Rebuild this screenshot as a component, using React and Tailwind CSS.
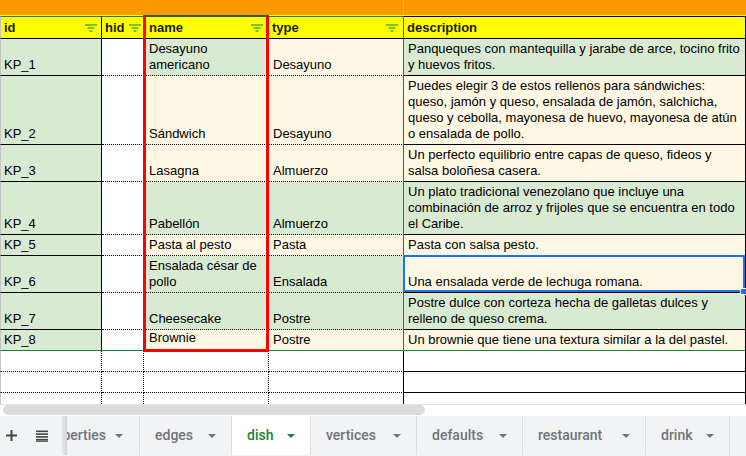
import React from 'react';

const G = 'bg-[#d9ead3]';
const C = 'bg-[#fdf7e3]';

const ROWS = [
  { id: 'KP_1', h: 'h-[37px]', name: ['Desayuno', 'americano'], nb: G, type: 'Desayuno', tb: C,
    desc: ['Panqueques con mantequilla y jarabe de arce, tocino frito', 'y huevos fritos.'], db: G },
  { id: 'KP_2', h: 'h-[69px]', name: ['Sándwich'], nb: C, type: 'Desayuno', tb: C,
    desc: ['Puedes elegir 3 de estos rellenos para sándwiches:', 'queso, jamón y queso, ensalada de jamón, salchicha,', 'queso y cebolla, mayonesa de huevo, mayonesa de atún', 'o ensalada de pollo.'], db: C },
  { id: 'KP_3', h: 'h-[37px]', name: ['Lasagna'], nb: C, type: 'Almuerzo', tb: C,
    desc: ['Un perfecto equilibrio entre capas de queso, fideos y', 'salsa boloñesa casera.'], db: C },
  { id: 'KP_4', h: 'h-[53px]', name: ['Pabellón'], nb: G, type: 'Almuerzo', tb: G,
    desc: ['Un plato tradicional venezolano que incluye una', 'combinación de arroz y frijoles que se encuentra en todo', 'el Caribe.'], db: G },
  { id: 'KP_5', h: 'h-[21px]', name: ['Pasta al pesto'], nb: C, type: 'Pasta', tb: C,
    desc: ['Pasta con salsa pesto.'], db: C },
  { id: 'KP_6', h: 'h-[37px]', name: ['Ensalada césar de', 'pollo'], nb: G, type: 'Ensalada', tb: G,
    desc: ['Una ensalada verde de lechuga romana.'], db: C },
  { id: 'KP_7', h: 'h-[37px]', name: ['Cheesecake'], nb: G, type: 'Postre', tb: G,
    desc: ['Postre dulce con corteza hecha de galletas dulces y', 'relleno de queso crema.'], db: G },
  { id: 'KP_8', h: 'h-[21px]', name: ['Brownie'], nb: C, type: 'Postre', tb: C,
    desc: ['Un brownie que tiene una textura similar a la del pastel.'], db: C, raise: true },
];

const TABS = [
  { label: 'edges', w: 'w-[92px]' },
  { label: 'dish', w: 'w-[79px]', active: true },
  { label: 'vertices', w: 'w-[106px]' },
  { label: 'defaults', w: 'w-[106px]' },
  { label: 'restaurant', w: 'w-[123px]' },
  { label: 'drink', w: 'w-[84px]' },
];

const cell = 'flex flex-col justify-end px-[3px] pb-[2px] leading-[16px] overflow-hidden whitespace-nowrap';
const dotB = 'border-b border-b-black [border-bottom-style:dotted]';

const Filter = () => (
  <svg width="12" height="8" viewBox="0 0 12 8" className="shrink-0">
    <g stroke="#1e9a46" strokeWidth="1.2">
      <line x1="0" y1="1" x2="12" y2="1" />
      <line x1="2.5" y1="4" x2="9.5" y2="4" />
      <line x1="4.5" y1="7" x2="7.5" y2="7" />
    </g>
  </svg>
);

const Caret = ({ color }) => (
  <svg width="8" height="4" viewBox="0 0 8 4" className="shrink-0">
    <polygon points="0,0 8,0 4,4" fill={color} />
  </svg>
);

const App = () => {
  return (
    <div className="relative w-[746px] h-[456px] overflow-hidden bg-white flex flex-col font-['Liberation_Sans',Arial,sans-serif] text-[13px] text-black">
      {/* orange frozen row */}
      <div className="h-[15px] shrink-0 flex bg-[#ff9900]">
        <div className="w-[403px] shrink-0" />
        <div className="w-px bg-[#f7ad45]" />
      </div>

      {/* header */}
      <div className="h-[24px] shrink-0 flex font-bold text-[#1c1c1c] bg-[#ffff00] pt-[1px]">
        <div className="w-[102px] shrink-0 flex items-center justify-between pl-[3px] pr-[4px] border-l border-l-[#c4c4c4] border-t border-t-[#188038] border-b border-b-black border-r border-r-black">
          <span>id</span><Filter />
        </div>
        <div className="w-[42px] shrink-0 flex items-center justify-between pl-[3px] pr-[3px] border-t border-t-[#188038] border-b border-b-black">
          <span>hid</span><Filter />
        </div>
        <div className="w-[125px] shrink-0 flex items-center justify-between pl-[5px] pr-[6px] border-t border-t-[#188038] border-b border-b-black">
          <span>name</span><Filter />
        </div>
        <div className="w-[135px] shrink-0 flex items-center justify-between pl-[3px] pr-[5px] border-t border-t-[#188038] border-b border-b-black border-r border-r-[#188038]">
          <span>type</span><Filter />
        </div>
        <div className="w-[342px] shrink-0 flex items-center pl-[3px] border-t border-t-black border-b border-b-black border-r border-r-black">
          <span>description</span>
        </div>
      </div>

      {/* data rows */}
      {ROWS.map((r, i) => {
        const last = i === ROWS.length - 1;
        const bot = last ? 'border-b border-b-[#188038]' : dotB;
        return (
          <div key={r.id} className={`flex shrink-0 ${r.h}`}>
            <div className={`w-[102px] shrink-0 ${G} ${cell} pl-[3px] border-l border-l-[#c4c4c4] border-r border-r-black border-b ${last ? 'border-b-[#188038]' : 'border-b-black'}`}>
              {r.id}
            </div>
            <div className={`w-[42px] shrink-0 bg-white ${cell} ${bot}`} />
            <div className={`w-[125px] shrink-0 ${r.nb} ${cell} pl-[5px] ${r.raise ? 'pb-[4px]' : ''} ${bot}`}>
              {r.name.map((l) => <div key={l}>{l}</div>)}
            </div>
            <div className={`w-[135px] shrink-0 ${r.tb} ${cell} pl-[4px] border-r border-r-[#188038] ${bot}`}>
              {r.type}
            </div>
            <div className={`w-[342px] shrink-0 ${r.db} ${cell} pl-[4px] border-r border-r-black border-b ${last ? 'border-b-[#188038]' : 'border-b-black'}`}>
              {r.desc.map((l) => <div key={l}>{l}</div>)}
            </div>
          </div>
        );
      })}

      {/* empty rows */}
      {['h-[21px]', 'h-[21px]', 'h-[11px]'].map((h, i) => (
        <div key={i} className={`flex shrink-0 ${h}`}>
          <div className={`w-[102px] shrink-0 border-l border-l-[#c4c4c4] border-r border-r-black [border-right-style:dotted] ${i < 2 ? dotB : ''}`} />
          <div className={`w-[42px] shrink-0 border-r border-r-black [border-right-style:dotted] ${i < 2 ? dotB : ''}`} />
          <div className={`w-[125px] shrink-0 border-r border-r-black [border-right-style:dotted] ${i < 2 ? dotB : ''}`} />
          <div className={`w-[135px] shrink-0 border-r border-r-black ${i < 2 ? dotB : ''}`} />
          <div className={`w-[342px] shrink-0 border-r border-r-black ${i < 2 ? 'border-b border-b-black' : ''}`} />
        </div>
      ))}

      {/* horizontal scrollbar */}
      <div className="h-[12px] shrink-0 bg-white border-t border-t-[#e3e3e3] flex items-start pl-[3px]">
        <div className="w-[422px] h-[10px] rounded-full bg-[#dadce0]" />
      </div>

      {/* sheet tabs */}
      <div className="h-[40px] shrink-0 flex bg-[#f1f3f4] font-['Roboto','Liberation_Sans',sans-serif] text-[14px] font-medium pb-[1px]">
        <div className="w-[62px] shrink-0 flex items-center">
          <svg width="11" height="11" viewBox="0 0 11 11" className="ml-[6px]">
            <path d="M5.5 0v11M0 5.5h11" stroke="#444746" strokeWidth="2" />
          </svg>
          <svg width="12" height="12" viewBox="0 0 12 12" className="ml-[19px]">
            <g fill="#444746">
              <rect x="0" y="0.5" width="12" height="1.6" />
              <rect x="0" y="3.3" width="12" height="1.6" />
              <rect x="0" y="6.1" width="12" height="1.6" />
              <rect x="0" y="8.9" width="12" height="1.6" />
              <rect x="0" y="10.6" width="12" height="1.2" />
            </g>
          </svg>
        </div>
        <div className="w-[5px] shrink-0 bg-linear-to-r from-[#e6e7e8] to-[#d2d3d5]" />
        <div className="flex-1 flex overflow-hidden">
          <div className="w-[73px] shrink-0 flex items-center justify-end border-r border-r-[#dadce0] text-[#70757a] whitespace-nowrap">
            <span>properties</span>
            <span className="ml-[9px] mr-[16px] flex"><Caret color="#70757a" /></span>
          </div>
          {TABS.map((t) => (
            <div key={t.label}
              className={`${t.w} shrink-0 flex items-center pl-[15px] border-r border-r-[#dadce0] whitespace-nowrap ${t.active ? 'bg-white text-[#188038]' : 'text-[#70757a]'}`}>
              <span>{t.label}</span>
              <span className="ml-auto mr-[15px] flex"><Caret color={t.active ? '#188038' : '#70757a'} /></span>
            </div>
          ))}
        </div>
      </div>

      {/* selected range (name column) */}
      <div className="absolute left-[143px] top-[15px] w-[126px] h-[337px] border-x-[3px] border-b-[3px] border-[#ff0000] border-t-2 border-t-[#2f5a3a] pointer-events-none" />

      {/* active cell */}
      <div className="absolute left-[403px] top-[255px] w-[342px] h-[37px] border-2 border-[#1a73e8] pointer-events-none" />
      <div className="absolute left-[740px] top-[288px] w-[7px] h-[7px] bg-[#1a73e8] border border-white" />
    </div>
  );
};

export default App;
